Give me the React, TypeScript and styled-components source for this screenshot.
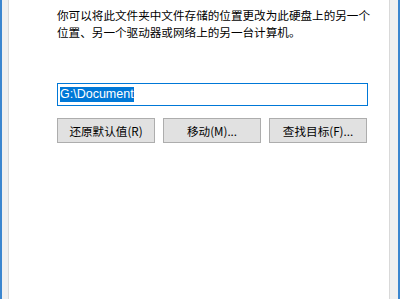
import React from "react";
import styled, { createGlobalStyle } from "styled-components";

const GlobalStyle = createGlobalStyle`
  html, body {
    margin: 0;
    padding: 0;
    background: #ffffff;
  }
  * {
    box-sizing: border-box;
  }
`;

const uiFont = `"Noto Sans CJK SC", "Noto Sans", sans-serif`;

const Window = styled.div`
  display: flex;
  width: 400px;
  height: 299px;
  background: #f0f0f0;
  border-left: 2px solid #3b86cf;
  border-right: 2px solid #3b86cf;
  padding: 0 8px 0 6px;
  font-family: ${uiFont};
`;

const TabPage = styled.div`
  flex: 1;
  min-width: 0;
  display: flex;
  flex-direction: column;
  background: #ffffff;
  border-left: 1px solid #d9d9d9;
  border-right: 1px solid #d9d9d9;
  padding: 7px 21px 0 48px;
`;

const Description = styled.p`
  margin: 0;
  font-size: 11.6px;
  line-height: 17px;
  color: #000000;
  white-space: nowrap;
`;

const PathInput = styled.div`
  margin-top: 42px;
  height: 23px;
  display: flex;
  align-items: center;
  padding: 0 2px;
  border: 1px solid #0078d7;
  background: #ffffff;
`;

const Selected = styled.span`
  background: #0078d7;
  color: #ffffff;
  font-family: "Liberation Sans", Arial, sans-serif;
  font-size: 12.5px;
  line-height: 15px;
`;

const ButtonRow = styled.div`
  margin-top: 12px;
  display: flex;
  gap: 8px;
`;

const Button = styled.button`
  width: 98px;
  height: 25px;
  padding: 0;
  background: #e1e1e1;
  border: 1px solid #adadad;
  border-radius: 0;
  font-family: ${uiFont};
  font-size: 11.6px;
  color: #000000;
`;

export default function App() {
  return (
    <>
      <GlobalStyle />
      <Window>
        <TabPage>
          <Description>
            你可以将此文件夹中文件存储的位置更改为此硬盘上的另一个
            <br />
            位置、另一个驱动器或网络上的另一台计算机。
          </Description>
          <PathInput>
            <Selected>G:\Document</Selected>
          </PathInput>
          <ButtonRow>
            <Button>还原默认值(R)</Button>
            <Button>移动(M)...</Button>
            <Button>查找目标(F)...</Button>
          </ButtonRow>
        </TabPage>
      </Window>
    </>
  );
}
